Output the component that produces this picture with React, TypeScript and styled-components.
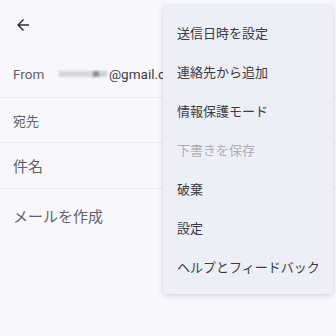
import React from "react";
import styled, { createGlobalStyle } from "styled-components";

const Global = createGlobalStyle`
  html, body { margin: 0; padding: 0; background: #f8f8fc; }
  body { font-family: Roboto, "Noto Sans CJK JP", sans-serif; }
`;

const Page = styled.div`
  position: relative;
  width: 336px;
  height: 336px;
  overflow: hidden;
  background: #f8f8fc;
`;

const Header = styled.div`
  height: 50px;
  display: flex;
  align-items: center;
  padding-left: 14px;
  box-sizing: border-box;
`;

const Row = styled.div<{ $h: number; $size?: number }>`
  height: ${(p) => p.$h}px;
  display: flex;
  align-items: center;
  padding-left: 13px;
  box-sizing: border-box;
  border-bottom: 1px solid #ebebf0;
  color: #5f6068;
  font-size: ${(p) => p.$size ?? 13}px;
  white-space: nowrap;
`;

const Label = styled.span`
  width: 45px;
  font-size: 13.5px;
`;

const FromValue = styled.span`
  display: inline-flex;
  align-items: center;
  width: 106px;
  overflow: hidden;
`;

const Blur = styled.span`
  display: inline-flex;
  align-items: center;
  margin-right: 2px;
  filter: blur(0.8px);
`;

const Chip = styled.span<{ $w: number; $c: string }>`
  display: inline-block;
  width: ${(p) => p.$w}px;
  height: 6px;
  background: ${(p) => p.$c};
`;

const Email = styled.span`
  color: #3c3d44;
  font-size: 13.5px;
`;

const Body = styled.div`
  padding: 16px 13px;
  font-size: 15px;
  color: #5f6068;
`;

const Menu = styled.div`
  position: absolute;
  top: 5px;
  left: 163px;
  width: 170px;
  padding: 8px 0 8px;
  box-sizing: border-box;
  background: #eeeef6;
  border-radius: 3px;
  box-shadow: 0 2px 6px rgba(0, 0, 0, 0.12), 0 0 2px rgba(0, 0, 0, 0.08);
`;

const Item = styled.div<{ $disabled?: boolean }>`
  height: 39px;
  display: flex;
  align-items: center;
  padding-left: 14px;
  font-size: 13px;
  color: ${(p) => (p.$disabled ? "#aeafb6" : "#3a3b43")};
  white-space: nowrap;
`;

const items: { t: string; d?: boolean }[] = [
  { t: "送信日時を設定" },
  { t: "連絡先から追加" },
  { t: "情報保護モード" },
  { t: "下書きを保存", d: true },
  { t: "破棄" },
  { t: "設定" },
  { t: "ヘルプとフィードバック" },
];

export default function App() {
  return (
    <Page>
      <Global />
      <Header>
        <svg width="18" height="18" viewBox="0 0 24 24" fill="#2f3036">
          <path d="M20 11H7.83l5.59-5.59L12 4l-8 8 8 8 1.41-1.41L7.83 13H20v-2z" />
        </svg>
      </Header>
      <Row $h={48}>
        <Label>From</Label>
        <FromValue>
          <Blur>
            <Chip $w={35} $c="#d6d6dc" />
            <Chip $w={6} $c="#8e8f96" />
            <Chip $w={8} $c="#cfcfd6" />
          </Blur>
          <Email>@gmail.com</Email>
        </FromValue>
      </Row>
      <Row $h={45}>宛先</Row>
      <Row $h={46} $size={15}>件名</Row>
      <Body>メールを作成</Body>
      <Menu>
        {items.map((i) => (
          <Item key={i.t} $disabled={i.d}>
            {i.t}
          </Item>
        ))}
      </Menu>
    </Page>
  );
}
